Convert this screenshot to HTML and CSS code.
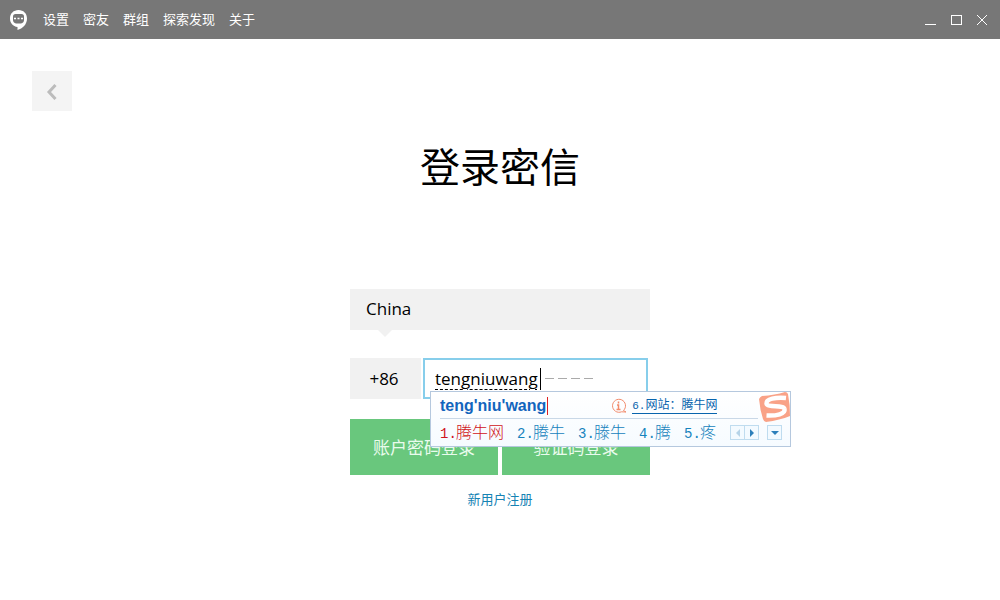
FILE: index.html
```html
<!DOCTYPE html>
<html lang="zh-CN">
<head>
<meta charset="utf-8">
<title>登录密信</title>
<link rel="stylesheet" href="styles.css">
</head>
<body>
<header class="titlebar">
  <svg class="logo" viewBox="0 0 20 22" aria-hidden="true">
    <path d="M10.500 1C5.500 1 2 4.500 2 9.500c0 4.500 3 8 7.500 8.500v3c5-1.500 9.500-5.500 9.500-11.500C19 4.500 15.500 1 10.500 1z" fill="#fff"/>
    <path d="M7.500 5h6q2.500 0 2.500 2.500v3.500q0 2.500-3 3.500H8Q5 13.500 5 11V7.500Q5 5 7.500 5z" fill="#777"/>
    <path d="M6 9.500h2M9.500 9.500h2M13 9.500h2" stroke="#fff" stroke-width="1.500"/>
  </svg>
  <nav class="menu">
    <a href="#">设置</a><a href="#">密友</a><a href="#">群组</a><a href="#">探索发现</a><a href="#">关于</a>
  </nav>
  <div class="window-controls">
    <button type="button" aria-label="最小化"><svg viewBox="0 0 12 12"><path d="M1 10.500h11"/></svg></button>
    <button type="button" aria-label="最大化"><svg viewBox="0 0 12 12"><rect x="1.500" y="1.500" width="10" height="9"/></svg></button>
    <button type="button" aria-label="关闭"><svg viewBox="0 0 12 12"><path d="M1 1l10 10M11 1L1 11"/></svg></button>
  </div>
</header>
<main class="page">
  <button class="back" type="button" aria-label="返回">
    <svg viewBox="0 0 12 18"><path d="M9.500 3L3 10l6.500 7"/></svg>
  </button>
  <h1 class="title">登录密信</h1>
  <form class="login">
    <button class="country" type="button">China</button>
    <div class="phone">
      <label class="code" for="phone">+86</label>
      <div class="field">
        <input class="number" id="phone" type="text" value="tengniuwang">
        <span class="caret"></span>
        <span class="dashes"><i></i><i></i><i></i><i></i></span>
        <section class="ime" aria-label="输入法">
          <div class="ime-top">
            <span class="pinyin">teng'niu'wang</span>
            <svg class="info" viewBox="0 0 16 16" aria-hidden="true">
              <path d="M12.500 12.500A6.500 6.500 0 1 0 10.500 13.800L15 14z"/>
              <path d="M7.500 3.500v2M6 7h1.500v4.500M5.500 11.500h4" stroke-width="1.500"/>
            </svg>
            <a class="site" href="#"><span class="num">6.</span>网站：腾牛网</a>
          </div>
          <div class="ime-bottom">
            <ol class="candidates">
              <li class="active"><span class="num">1.</span>腾牛网</li>
              <li><span class="num">2.</span>腾牛</li>
              <li><span class="num">3.</span>滕牛</li>
              <li><span class="num">4.</span>腾</li>
              <li><span class="num">5.</span>疼</li>
            </ol>
            <div class="pager">
              <button class="faded" type="button" aria-label="上一页"><svg viewBox="0 0 8 8"><path d="M6 0v8L2 4z"/></svg></button>
              <button type="button" aria-label="下一页"><svg viewBox="0 0 8 8"><path d="M2 0v8l4-4z"/></svg></button>
            </div>
            <button class="more" type="button" aria-label="更多"><svg viewBox="0 0 8 8"><path d="M0 2h8L4 6z"/></svg></button>
          </div>
          <svg class="sogou" viewBox="0 0 32 30" aria-hidden="true">
            <path d="M3 4Q16 3 26 0q2 0 3 2 2 10 2 22-10 4-24 6-2 0-3-3Q1 18 0 7q1-2 3-3z" fill="#f9a287"/>
            <path d="M27 6C17 5 7 7 7.500 11.500c.5 4.500 17.500 1 18 5.500 1 5-8 7-18 6.500" fill="none" stroke="#fff" stroke-width="4.500"/>
          </svg>
        </section>
      </div>
    </div>
    <div class="actions">
      <button type="submit">账户密码登录</button>
      <button type="button">验证码登录</button>
    </div>
    <a class="register" href="#">新用户注册</a>
  </form>
</main>
</body>
</html>
```
FILE: styles.css
```css
* { box-sizing: border-box; }
body {
  margin: 0;
  background: #fff;
  color: #000;
  font-family: "Open Sans", "Noto Sans CJK SC", sans-serif;
}
button { border: 0; padding: 0; font: inherit; }
a { text-decoration: none; }
.titlebar {
  display: flex;
  align-items: center;
  height: 39px;
  padding: 0 12px 0 8px;
  background: #777;
}
.logo { width: 20px; height: 22px; }
.menu {
  display: flex;
  gap: 14px;
  margin-left: 15px;
  padding-bottom: 2px;
  font-size: 13px;
  line-height: 20px;
}
.menu a { color: #fff; }
.window-controls { display: flex; gap: 14px; margin-left: auto; }
.window-controls button { display: flex; background: none; }
.window-controls svg {
  width: 12px;
  height: 12px;
  fill: none;
  stroke: #fff;
}
.page {
  display: flex;
  flex-direction: column;
  align-items: center;
  padding: 32px;
}
.back {
  display: grid;
  place-items: center;
  align-self: flex-start;
  width: 40px;
  height: 40px;
  background: #f4f4f4;
}
.back svg {
  width: 12px;
  height: 18px;
  fill: none;
  stroke: #bcbcbc;
  stroke-width: 3;
}
.title {
  margin: 26px 0 92px;
  font-size: 40px;
  font-weight: 400;
  line-height: 60px;
}
.login {
  display: flex;
  flex-direction: column;
  width: 300px;
}
.country {
  position: relative;
  height: 41px;
  padding: 0 16px 2px;
  background: #f1f1f1;
  font-size: 17px;
  text-align: left;
}
.country::after {
  content: "";
  position: absolute;
  top: 100%;
  left: 28px;
  border: 7px solid transparent;
  border-top-color: #f1f1f1;
  border-bottom: 0;
}
.phone {
  display: flex;
  gap: 2px;
  margin-top: 28px;
  padding-right: 2px;
  font-size: 17px;
}
.code {
  display: grid;
  place-items: center;
  width: 71px;
  height: 41px;
  padding-right: 3px;
  background: #f1f1f1;
}
.field {
  position: relative;
  display: flex;
  flex: 1;
  align-items: center;
  height: 41px;
  padding-left: 10px;
  border: 2px solid #87ceeb;
}
.number {
  field-sizing: content;
  padding: 0 2px 0 0;
  border: 0;
  outline: 0;
  background: none;
  font: inherit;
  text-decoration: underline dashed 1px;
  text-underline-offset: 4px;
}
.caret { width: 1px; height: 22px; background: #000; }
.dashes { display: flex; gap: 4px; margin-left: 4px; }
.dashes i { width: 9px; height: 1px; background: #aaa; }
.ime {
  position: absolute;
  top: 31px;
  left: 5px;
  width: 361px;
  padding: 0 8px 0 9px;
  border: 1px solid #b5c8de;
  background: linear-gradient(#fff, #f6fbff);
  color: #1683bd;
  font-family: "Liberation Sans", "Noto Sans CJK SC", sans-serif;
}
.ime-top {
  display: flex;
  align-items: center;
  height: 27px;
  margin-right: 24px;
  padding-top: 2px;
  border-bottom: 1px solid #c9d8e7;
}
.pinyin {
  padding-right: 1px;
  border-right: 1px solid #d22;
  color: #1265bd;
  font-size: 16px;
  font-weight: 700;
  line-height: 18px;
}
.info {
  width: 16px;
  height: 16px;
  margin-left: 63px;
  fill: none;
  stroke: #f28b6c;
}
.site {
  margin-left: 5px;
  color: #0864ad;
  font-size: 12px;
  line-height: 14px;
  border-bottom: 1px solid #0864ad;
}
.num { font-family: "Liberation Mono", monospace; }
.site .num { font-size: 11px; }
.ime-bottom { display: flex; align-items: center; height: 27px; }
.candidates {
  display: flex;
  gap: 13px;
  margin: 0;
  padding: 2px 0 0;
  font-size: 16px;
  font-weight: 300;
  line-height: 24px;
  list-style: none;
  white-space: nowrap;
}
.candidates .num { display: inline-block; width: 16px; font-size: 14px; }
.candidates .active { color: #d01420; }
.pager { display: flex; margin-left: auto; }
.pager button, .more {
  display: grid;
  place-items: center;
  width: 15px;
  height: 15px;
  border: 1px solid #bfdcef;
  background: #f3faff;
}
.pager button + button { border-left: 0; width: 14px; }
.more { margin-left: 8px; }
.ime-bottom svg { width: 8px; height: 8px; fill: #2c7fba; }
.ime-bottom .faded svg { fill: #b5d3e8; }
.sogou {
  position: absolute;
  top: 0;
  right: -1px;
  width: 32px;
  height: 30px;
}
.actions { display: flex; gap: 4px; margin-top: 20px; }
.actions button {
  flex: 1;
  height: 56px;
  padding-bottom: 2px;
  background: #69c77d;
  color: #e9fbed;
  font-size: 17px;
}
.register {
  align-self: center;
  margin-top: 14px;
  color: #1683b4;
  font-size: 13px;
  line-height: 20px;
}
```
